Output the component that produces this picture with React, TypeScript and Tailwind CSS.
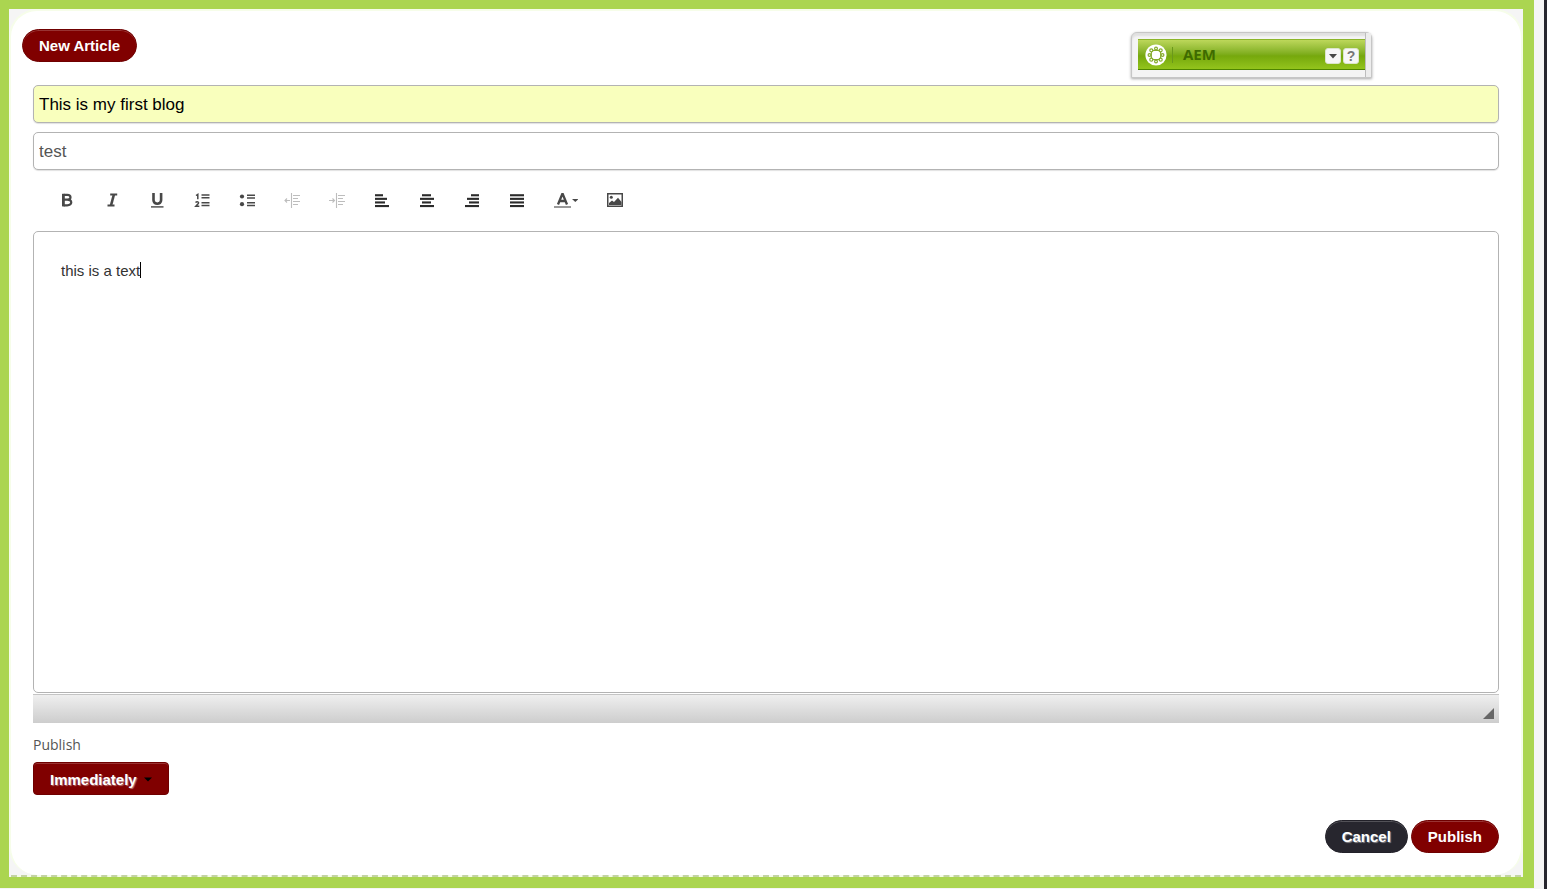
import type { ReactNode } from 'react'
import clsx from 'clsx'

const SHADOW_TEXT = '[text-shadow:1px_1px_1px_rgba(255,255,255,0.45)]'

interface PillButtonProps {
  children: ReactNode
  dark?: boolean
}

function PillButton({ children, dark }: PillButtonProps) {
  return (
    <button
      type="button"
      className={clsx(
        'h-[33px] px-4 pt-0.5 rounded-full border text-[15px] font-bold text-white whitespace-nowrap',
        'shadow-[inset_0_1px_0_rgba(255,255,255,0.2)]',
        dark ? 'bg-[#27262e] border-[#222129]' : 'bg-[#800000] border-[#6f0000]',
        dark && SHADOW_TEXT
      )}
    >
      {children}
    </button>
  )
}

interface ToolButtonProps {
  label: string
  wide?: boolean
  disabled?: boolean
  children: ReactNode
}

function ToolButton({ label, wide, disabled, children }: ToolButtonProps) {
  return (
    <button
      type="button"
      aria-label={label}
      disabled={disabled}
      className={clsx(
        'flex h-9 items-center justify-center',
        wide ? 'w-[53px]' : 'w-[45px]',
        disabled ? 'text-[#bdbdbd]' : 'text-[#484848]'
      )}
    >
      <svg className={clsx('h-4', wide ? 'w-6' : 'w-4')} viewBox={wide ? '0 0 24 16' : '0 0 16 16'} fill="none" stroke="currentColor">
        {children}
      </svg>
    </button>
  )
}

// four bars, each given as [start, width]
function AlignBars({ rows }: { rows: number[][] }) {
  return (
    <g stroke="none" fill="#2b2b2b">
      {rows.map(([x, width], i) => (
        <rect key={i} x={x} y={2.2 + i * 3.6} width={width} height="2.1" />
      ))}
    </g>
  )
}

function Toolbar() {
  return (
    <div role="toolbar" aria-label="Formatting" className="flex h-[61px] items-center pb-0.5 pl-[11px]">
      <ToolButton label="Bold">
        <path d="M4.6 2.9h3.6c4.4 0 4.400 4.800 0 4.800H4.600M8.200 7.700c5.400 0 5.400 5.600 0 5.600H4.600" strokeWidth="2.200" />
        <path d="M4.400 1.800v12.600" strokeWidth="2.800" />
      </ToolButton>
      <ToolButton label="Italic">
        <path d="M9.900 2.500 7 13.500" strokeWidth="2.600" />
        <path d="M6.200 2.500h7M3.500 13.500h7" strokeWidth="1.800" />
      </ToolButton>
      <ToolButton label="Underline">
        <path d="M4.500 1v7.300c0 4.600 7.600 4.600 7.600 0V1" strokeWidth="2.600" />
        <path d="M2 14.900h12.500" strokeWidth="1.400" />
      </ToolButton>
      <ToolButton label="Numbered list">
        <path d="M2 3.500 3.800 2.300v5M1.500 10.500c1.500-1.400 3.800-.6 2.800 1L1.800 14.300h3.500" strokeWidth="1.500" />
        <path d="M7.500 3h8M7.500 5.800h8M7.500 10.800h8M7.500 13.500h8" strokeWidth="1.500" />
      </ToolButton>
      <ToolButton label="Bulleted list">
        <circle cx="3" cy="4.500" r="2.100" fill="currentColor" stroke="none" />
        <circle cx="3" cy="12.200" r="2.100" fill="currentColor" stroke="none" />
        <path d="M8 3.200h8M8 6h8M8 10.800h8M8 13.600h8" strokeWidth="1.500" />
      </ToolButton>
      <ToolButton label="Decrease indent" disabled>
        <path d="M7.500 1v15M9 3.500h7M9 6.500h5M9 9.500h7M9 12.500h5M0.500 8.500H6M3 6.500l-2 2 2 2" strokeWidth="1.100" />
      </ToolButton>
      <ToolButton label="Increase indent" disabled>
        <path d="M7.500 1v15M9 3.500h7M9 6.500h5M9 9.500h7M9 12.500h5M0 8.500h5.500M3.500 6.500l2 2-2 2" strokeWidth="1.100" />
      </ToolButton>
      <ToolButton label="Align left">
        <AlignBars rows={[[1, 8], [1, 12], [1, 10], [1, 14]]} />
      </ToolButton>
      <ToolButton label="Align center">
        <AlignBars rows={[[3, 9], [1, 14], [3, 9], [1, 14]]} />
      </ToolButton>
      <ToolButton label="Align right">
        <AlignBars rows={[[7, 8], [3, 12], [5, 10], [1, 14]]} />
      </ToolButton>
      <ToolButton label="Justify">
        <AlignBars rows={[[1, 14], [1, 14], [1, 14], [1, 14]]} />
      </ToolButton>
      <ToolButton label="Text color" wide>
        <path d="M4 12.500 8.200 2.200h.600L13 12.500M5.500 9h6" strokeWidth="2.300" />
        <path d="M0 15h17" stroke="#999" strokeWidth="2" />
        <path d="M18 7h6.500l-3.200 3z" fill="currentColor" stroke="none" />
      </ToolButton>
      <ToolButton label="Insert image">
        <rect x="0.750" y="1.750" width="14.500" height="12.500" strokeWidth="1.500" />
        <circle cx="4.300" cy="5.200" r="1.500" fill="currentColor" stroke="none" />
        <path d="M2 13v-2l3-2.500 2 1.500 4-4.200L14.500 10v3z" fill="currentColor" stroke="none" />
      </ToolButton>
    </div>
  )
}

function Sidekick() {
  return (
    <aside className="absolute right-[172px] top-8 flex w-[241px] h-[46px] rounded-t-md border border-[#c6c6c6] bg-[#f4f4f4] pt-1.5 pl-1.5 shadow-[0_1px_3px_rgba(0,0,0,0.35),inset_0_3px_2px_#e0e0e0]">
      <div className="flex h-[31px] flex-1 items-center border-t border-b border-t-[#8cb52c] border-b-[#4f8500] bg-linear-to-b from-[#bdd75a] from-0% via-[#76a80c] via-55% to-[#93c41c] pl-1.5 pr-1">
        <svg className="size-6" viewBox="0 0 24 24" fill="none">
          <circle cx="12" cy="12" r="10.600" fill="#fff" />
          <rect x="7.300" y="7.300" width="9.400" height="9.400" rx="3" stroke="#86ac2c" strokeWidth="1.200" />
          <g fill="#fff" stroke="#86ac2c" strokeWidth="1.200">
            <circle cx="12" cy="5.500" r="1.400" />
            <circle cx="12" cy="18.500" r="1.400" />
            <circle cx="5.500" cy="12" r="1.400" />
            <circle cx="18.500" cy="12" r="1.400" />
            <circle cx="7.300" cy="7.300" r="1.500" />
            <circle cx="16.700" cy="7.300" r="1.500" />
            <circle cx="7.300" cy="16.700" r="1.500" />
            <circle cx="16.700" cy="16.700" r="1.500" />
          </g>
          <circle cx="12" cy="12" r="4" fill="#fff" />
        </svg>
        <div className="ml-1 h-4 w-px bg-[#6b981b]" />
        <h2 className="ml-2.5 flex-1 font-['Open_Sans',sans-serif] text-[15px] font-bold text-[#3f6b00]">AEM</h2>
        <div className="flex gap-0.5 pr-0.5 pt-0.5">
          <button type="button" aria-label="Collapse" className="flex size-4 items-center justify-center rounded-[3px] border border-[#dce5cb] bg-[#f7f7f7]">
            <svg className="h-1.5 w-2.5" viewBox="0 0 10 6" fill="#484848">
              <path d="M1 1h8L5 5.500z" />
            </svg>
          </button>
          <button type="button" aria-label="Help" className="flex size-4 items-center justify-center rounded-[3px] border border-[#dce5cb] bg-[#f7f7f7] text-[14px] leading-none font-bold text-[#777]">
            ?
          </button>
        </div>
      </div>
      <div className="-mt-1.5 w-1.5 border-l border-[#bdbdbd] bg-[#ededed]" />
    </aside>
  )
}

const inputClass =
  'block h-[38px] w-full rounded-[5px] border border-[#b3b3b3] px-[5px] pt-0.5 text-[17px] shadow-[0_1px_1px_rgba(0,0,0,0.12)]'

export default function App() {
  return (
    <div className="relative min-h-screen border-r-3 border-[#27262e] bg-[#f5f5f5] pr-2.5 pb-px font-['Liberation_Sans',Arial,sans-serif]">
      <main className="border-9 border-r-11 border-b-11 border-[#abd550] bg-[#f5f5f5]">
        <form className="rounded-[28px] border-2 border-b-0 border-[#f6fde9] bg-white px-[22px] pt-[18px] pb-[22px]">
          <div className="-ml-[11px]">
            <PillButton>New Article</PillButton>
          </div>

          <div className="mt-[23px] flex flex-col gap-[9px]">
            <input aria-label="Title" defaultValue="This is my first blog" className={clsx(inputClass, 'bg-[#f9ffbd] text-black')} />
            <input aria-label="Topic" defaultValue="test" className={clsx(inputClass, 'bg-white text-[#555]')} />
          </div>

          <Toolbar />

          <div
            role="textbox"
            aria-label="Article body"
            aria-multiline="true"
            contentEditable
            suppressContentEditableWarning
            className="h-[462px] rounded-[5px] border border-[#b3b3b3] px-[27px] py-[30px] text-[15px] leading-[18px] text-[#333] outline-none"
          >
            <span className="inline-block h-4 border-r border-black">this is a text</span>
          </div>
          <div className="mt-px flex h-[29px] items-end justify-end border-t border-[#c4c4c4] bg-linear-to-b from-[#efefef] to-[#cdcdcd] p-[5px] pb-1">
            <svg className="size-[11px]" viewBox="0 0 11 11" fill="#666">
              <path d="M11 0v11H0z" />
            </svg>
          </div>

          <label htmlFor="publish-type" className="mt-3 block font-['Open_Sans',sans-serif] text-[14px] leading-5 text-[#555]">
            Publish
          </label>
          <div className="relative mt-[7px] w-[136px]">
            <select
              id="publish-type"
              className={clsx(
                'block h-[33px] w-full appearance-none rounded-[4px] border border-[#6f0000] bg-[#800000] px-4 pt-[3px] text-[15px] font-bold text-white shadow-[inset_0_1px_0_rgba(255,255,255,0.2)]',
                SHADOW_TEXT
              )}
            >
              <option>Immediately</option>
            </select>
            <svg className="pointer-events-none absolute right-[17px] top-[15px] h-[5px] w-2" viewBox="0 0 8 5">
              <path d="M0 0.500h8L4 4.500z" />
            </svg>
          </div>

          <div className="mt-[25px] flex justify-end gap-[3px]">
            <PillButton dark>Cancel</PillButton>
            <PillButton>Publish</PillButton>
          </div>
        </form>
        <div className="mx-0.5 border-t-2 border-dashed border-[#c3d3a3] bg-[#f4fbe6]" />
      </main>
      <Sidekick />
    </div>
  )
}
